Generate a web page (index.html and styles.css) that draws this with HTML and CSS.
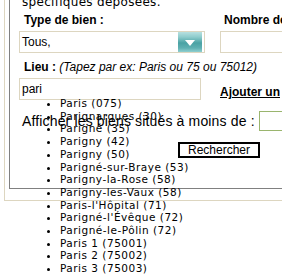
FILE: index.html
```html
<!DOCTYPE html>
<html>
<head>
<meta charset="utf-8">
<link rel="stylesheet" href="styles.css">
</head>
<body>
<div class="outer">
  <div class="inner">
    <p class="intro">spécifiques déposées.</p>
    <div class="grid">
      <div class="label">Type de bien :</div>
      <div class="label right">Nombre de</div>
      <div class="select">
        <span>Tous,</span>
        <span class="arrow"><svg width="24" height="20" viewBox="0 0 24 20"><polygon points="7,8 17,8 12,14" fill="#fff"/></svg></span>
      </div>
      <div class="box right"></div>
      <div class="label wide">Lieu : <i>(Tapez par ex: Paris ou 75 ou 75012)</i></div>
      <div class="box lieu">pari</div>
      <a class="add" href="#">Ajouter un</a>
    </div>
    <div class="dist">Afficher les biens situés à moins de : <span class="small-box"></span></div>
    <div class="btn-row"><button class="btn">Rechercher</button></div>
  </div>
</div>
<ul class="suggest">
  <li>Paris (075)</li>
  <li>Parignargues (30)</li>
  <li>Parigné (35)</li>
  <li>Parigny (42)</li>
  <li>Parigny (50)</li>
  <li>Parigné-sur-Braye (53)</li>
  <li>Parigny-la-Rose (58)</li>
  <li>Parigny-les-Vaux (58)</li>
  <li>Paris-l'Hôpital (71)</li>
  <li>Parigné-l'Évêque (72)</li>
  <li>Parigné-le-Pôlin (72)</li>
  <li>Paris 1 (75001)</li>
  <li>Paris 2 (75002)</li>
  <li>Paris 3 (75003)</li>
  <li>Paris 4 (75004)</li>
</ul>
</body>
</html>
```
FILE: styles.css
```css
html, body { margin: 0; padding: 0; background: #fff; overflow: hidden; }
body { width: 282px; height: 274px; position: relative; font-family: "Liberation Sans", Arial, sans-serif; color: #000; }
.outer {
  margin-left: 4px;
  border-left: 1px solid #ddd6c0;
  border-bottom: 1px solid #ddd6c0;
  height: 190px;
  padding-bottom: 10px;
}
.inner {
  margin-left: 4px;
  border-left: 1px solid #808080;
  border-bottom: 1px solid #808080;
  height: 189px;
  overflow: hidden;
  box-sizing: border-box;
}
.intro {
  margin: -5px 0 0 12px;
  font-family: "DejaVu Sans", Verdana, sans-serif;
  font-size: 12px;
  line-height: 14px;
  letter-spacing: 0.3px;
  white-space: nowrap;
}
.grid {
  display: grid;
  grid-template-columns: 186px 80px;
  column-gap: 15px;
  margin-left: 9px;
  margin-top: 3px;
}
.label { font-weight: bold; font-size: 12px; line-height: 14px; padding-left: 5px; margin-top: 1px; white-space: nowrap; }
.label.right { padding-left: 4px; }
.label.wide { grid-column: 1 / 3; margin-top: 7px; }
.label i { font-weight: normal; }
.select, .box {
  height: 22px;
  box-sizing: border-box;
  border: 1px solid #ddd6c0;
  margin-top: 4px;
  font-size: 12px;
  display: flex;
  align-items: center;
  padding-left: 2px;
}
.select { justify-content: space-between; padding-right: 2px; }
.arrow {
  width: 24px;
  height: 20px;
  display: block;
  background: linear-gradient(#b7e0e0 0%, #8ecccc 25%, #4aa2a4 55%, #5fb0b2 80%, #8fcfd0 100%);
}
.arrow svg { display: block; }
.box.lieu { width: 182px; margin-top: 4px; }
.add {
  align-self: end;
  font-weight: bold;
  font-size: 12px;
  color: #000;
  white-space: nowrap;
  margin-bottom: 1px;
}
.dist {
  margin: 11px 0 0 12px;
  font-size: 14px;
  line-height: 20px;
  letter-spacing: 0.15px;
  white-space: nowrap;
  display: flex;
  align-items: center;
}
.small-box {
  display: inline-block;
  width: 40px;
  height: 20px;
  box-sizing: border-box;
  border: 1px solid #9ab56e;
  margin-left: 4px;
  flex: none;
}
.btn-row { margin: 11px 0 0 168px; }
.btn {
  font-family: "Liberation Sans", Arial, sans-serif;
  font-size: 12px;
  width: 82px;
  height: 16px;
  border: 2px solid #000;
  background: #fff;
  padding: 0;
  line-height: 12px;
  display: block;
}
.suggest {
  position: absolute;
  left: 0;
  top: 97px;
  margin: 0;
  padding-left: 60px;
  font-family: "DejaVu Sans", Verdana, sans-serif;
  font-size: 10.5px;
  line-height: 12.7px;
  letter-spacing: 0.5px;
  list-style: disc;
}
```
